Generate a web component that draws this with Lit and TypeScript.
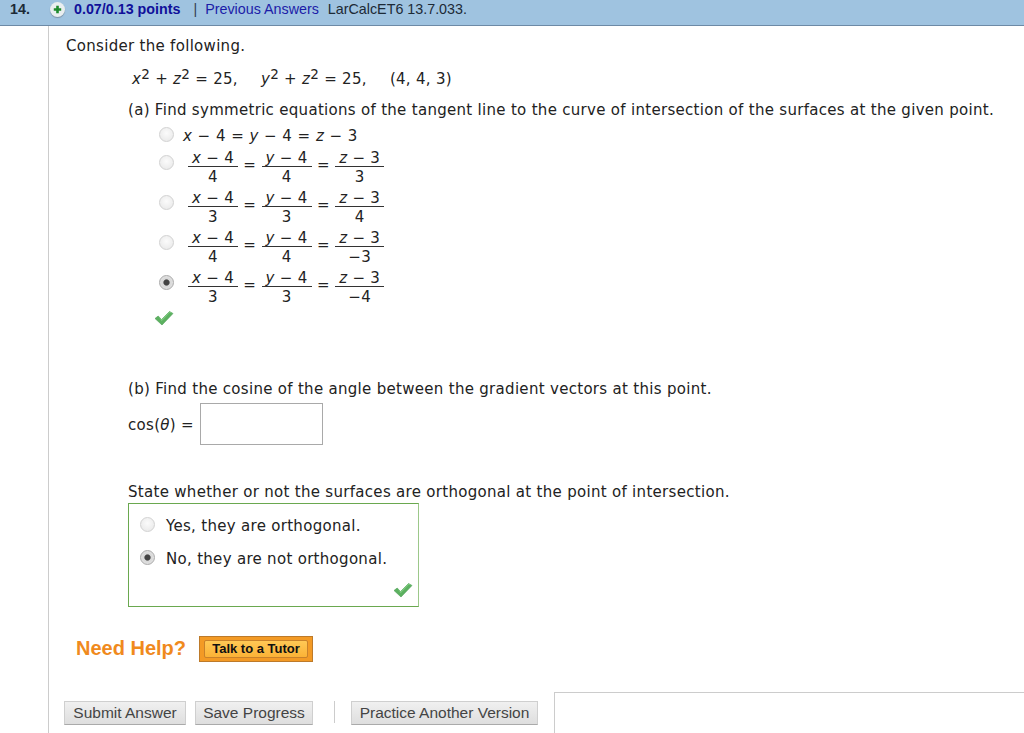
import { LitElement, html, css } from "lit";
import { customElement } from "lit/decorators.js";

const check = (cls: string) => html`<svg class="${cls}" width="20" height="16" viewBox="0 0 20 16"><path d="M1 8.5 L4.2 6 L7.5 9.5 L15.5 1.5 L19 3.5 L8 15 Z" fill="#5cb160" stroke="#4d9c55" stroke-width=".6"/><path d="M4.2 6 L7.5 9.5 L15.5 1.5 L19 3.5 L15.6 2.8 L7.6 11.2 Z" fill="#7fca80"/></svg>`;

const radio = (on = false) => html`<span class="radio ${on ? "on" : ""}"></span>`;

const frac = (n: any, d: any, cls = "") => html`<span class="frac ${cls}"><span class="num">${n}</span><span class="den">${d}</span></span>`;

const i = (s: string) => html`<i>${s}</i>`;

const options: [string, string, string][] = [
  ["4", "4", "3"],
  ["3", "3", "4"],
  ["4", "4", "\u22123"],
  ["3", "3", "\u22124"],
];

@customElement("app-root")
export class AppRoot extends LitElement {
  static styles = css`
    :host { display: block; width: 1024px; height: 733px; overflow: hidden; background: #fff; font-family: "DejaVu Sans", Verdana, sans-serif; font-size: 15px; letter-spacing: 0.3px; color: #222; }
    .head { height: 26px; box-sizing: border-box; background: #9fc3e0; border-bottom: 1px solid #6d8aa6; display: flex; align-items: center; font-family: "Liberation Sans", Arial, sans-serif; font-size: 14.3px; letter-spacing: 0; padding-bottom: 7px; white-space: nowrap; }
    .no { width: 50px; padding-left: 10px; box-sizing: border-box; font-weight: 700; color: #1c2a36; }
    .plus { width: 15px; height: 15px; border-radius: 50%; background: #e9eef0; box-shadow: 0 1px 1px #7a90a5; display: flex; align-items: center; justify-content: center; margin-right: 9px; }
    .pts { color: #10109a; font-weight: 700; }
    .bar { margin: 0 8px 0 13px; color: #33414f; }
    .prev { color: #1c1ca8; margin-right: 9px; }
    .ref { color: #1c2a36; }
    .main { margin-left: 48px; height: 707px; box-sizing: border-box; border-left: 1px solid #ccc; padding-left: 79px; display: flex; flex-direction: column; position: relative; }
    .intro { margin: 10px 0 0 -62px; height: 18px; line-height: 20px; }
    .eq { margin: 15px 0 0 4px; height: 18px; line-height: 20px; white-space: pre; }
    .gap { display: inline-block; width: 23px; }
    sup { font-size: 13.5px; line-height: 0; vertical-align: 5px; }
    i { font-style: italic; }
    .q { margin-top: 13px; height: 18px; line-height: 20px; white-space: nowrap; }
    .opts { display: flex; flex-direction: column; margin-top: 9px; }
    .opt { display: flex; align-items: center; height: 40px; margin-left: 31px; }
    .opt.plain { height: 18px; line-height: 20px; margin-bottom: 2px; word-spacing: 0.35px; }
    .radio { width: 15px; height: 15px; box-sizing: border-box; border-radius: 50%; border: 1px solid #d2d2d2; background: radial-gradient(circle at 50% 40%, #fbfbfb, #e6e6e6); flex: none; margin-top: -10px; }
    .radio.on { border-color: #aaa; background: radial-gradient(circle, #444 0 2.6px, #d8d8d8 3.6px, #e8e8e8); }
    .plain .radio { margin-top: -4px; margin-right: 9px; }
    .eqs { display: flex; align-items: center; margin-left: 14px; }
    .frac { display: flex; flex-direction: column; align-items: center; width: 50px; }
    .frac.last { width: 49px; }
    .num { align-self: stretch; text-align: center; border-bottom: 1px solid #333; height: 18px; line-height: 20px; white-space: pre; }
    .den { height: 20px; line-height: 20px; }
    .eqsign { width: 23.6px; text-align: center; padding-bottom: 5px; }
    .tick1 { display: block; margin: 3px 0 0 26px; }
    .q2 { margin-top: 53px; }
    .cos { display: flex; align-items: center; margin-top: 6px; height: 42px; line-height: 20px; }
    .cos span:first-child { padding-top: 2px; }
    .input { width: 123px; height: 42px; box-sizing: border-box; border: 1px solid #a9a9a9; margin-left: 6px; background: #fff; }
    .q3 { margin-top: 37px; }
    .box { margin-top: 3px; width: 291px; height: 104px; box-sizing: border-box; border: 1px solid #6aa84f; border-right-color: #9cc88a; padding: 12px 0 0 11px; display: flex; flex-direction: column; position: relative; }
    .boxrow { display: flex; align-items: center; height: 18px; margin-bottom: 15px; white-space: nowrap; line-height: 20px; }
    .boxrow span:last-child { padding-top: 1px; }
    .boxrow .radio { margin-right: 11px; margin-top: -2px; }
    .tick2 { position: absolute; right: 5px; bottom: 8px; }
    .help { display: flex; align-items: center; margin: 27px 0 0 -52px; height: 28px; font-family: "Liberation Sans", Arial, sans-serif; letter-spacing: 0; }
    .need { font-size: 20px; font-weight: 700; color: #f08a1d; margin-right: 13px; }
    .tutor { width: 114px; height: 26px; margin-top: 1px; box-sizing: border-box; background: #f39a25; border: 1px solid #bd7a2a; padding: 3px 4px; }
    .tutor span { display: block; height: 100%; box-sizing: border-box; border: 1px solid #c9822a; background: linear-gradient(#ffc855, #fbb236); border-radius: 2px; font-size: 13px; font-weight: 700; color: #111; text-align: center; line-height: 16px; }
    .foot { position: absolute; left: 0; right: 0; bottom: 0; height: 41px; display: flex; font-family: "Liberation Sans", Arial, sans-serif; font-size: 15.5px; letter-spacing: 0; }
    .btn { height: 24px; box-sizing: border-box; margin-top: 9px; background: linear-gradient(#f0f0f0, #dedede); border: 1px solid #cfcfcf; border-bottom-color: #aaa; color: #444; line-height: 22px; text-align: center; white-space: nowrap; flex: none; }
    .submit { width: 122px; margin-left: 15px; }
    .save { width: 118px; margin-left: 9px; }
    .practice { width: 187px; }
    .sep { width: 1px; height: 22px; margin: 9px 16px 0 21px; background: #ccc; }
    .corner { flex: 1; margin-left: 16px; border-top: 1px solid #ccc; border-left: 1px solid #ccc; }
  `;

  render() {
    return html`
      <div class="head">
        <span class="no">14.</span>
        <span class="plus"><svg width="9" height="9" viewBox="0 0 9 9"><path d="M3.2 .8h2.6v2.4h2.4v2.6H5.8v2.4H3.2V5.8H.8V3.2h2.4z" fill="#1f8a2e"/></svg></span>
        <span class="pts">0.07/0.13 points</span>
        <span class="bar">|</span>
        <span class="prev">Previous Answers</span>
        <span class="ref">LarCalcET6 13.7.033.</span>
      </div>
      <div class="main">
        <div class="intro">Consider the following.</div>
        <div class="eq">${i("x")}<sup>2</sup> + ${i("z")}<sup>2</sup> = 25,<span class="gap"></span>${i("y")}<sup>2</sup> + ${i("z")}<sup>2</sup> = 25,<span class="gap"></span>(4, 4, 3)</div>
        <div class="q">(a) Find symmetric equations of the tangent line to the curve of intersection of the surfaces at the given point.</div>
        <div class="opts">
          <div class="opt plain">${radio()}<span>${i("x")} − 4 = ${i("y")} − 4 = ${i("z")} − 3</span></div>
          ${options.map(([a, b, c], n) => html`
            <div class="opt">${radio(n === 3)}
              <span class="eqs">
                ${frac(html`${i("x")} − 4`, a)}<span class="eqsign">=</span>
                ${frac(html`${i("y")} − 4`, b)}<span class="eqsign">=</span>
                ${frac(html`${i("z")} − 3`, c, "last")}
              </span>
            </div>`)}
        </div>
        ${check("tick1")}
        <div class="q q2">(b) Find the cosine of the angle between the gradient vectors at this point.</div>
        <div class="cos"><span>cos(${i("θ")}) =</span><span class="input"></span></div>
        <div class="q q3">State whether or not the surfaces are orthogonal at the point of intersection.</div>
        <div class="box">
          <div class="boxrow">${radio()}<span>Yes, they are orthogonal.</span></div>
          <div class="boxrow">${radio(true)}<span>No, they are not orthogonal.</span></div>
          ${check("tick2")}
        </div>
        <div class="help"><span class="need">Need Help?</span><span class="tutor"><span>Talk to a Tutor</span></span></div>
        <div class="foot">
          <span class="btn submit">Submit Answer</span>
          <span class="btn save">Save Progress</span>
          <span class="sep"></span>
          <span class="btn practice">Practice Another Version</span>
          <span class="corner"></span>
        </div>
      </div>
    `;
  }
}
